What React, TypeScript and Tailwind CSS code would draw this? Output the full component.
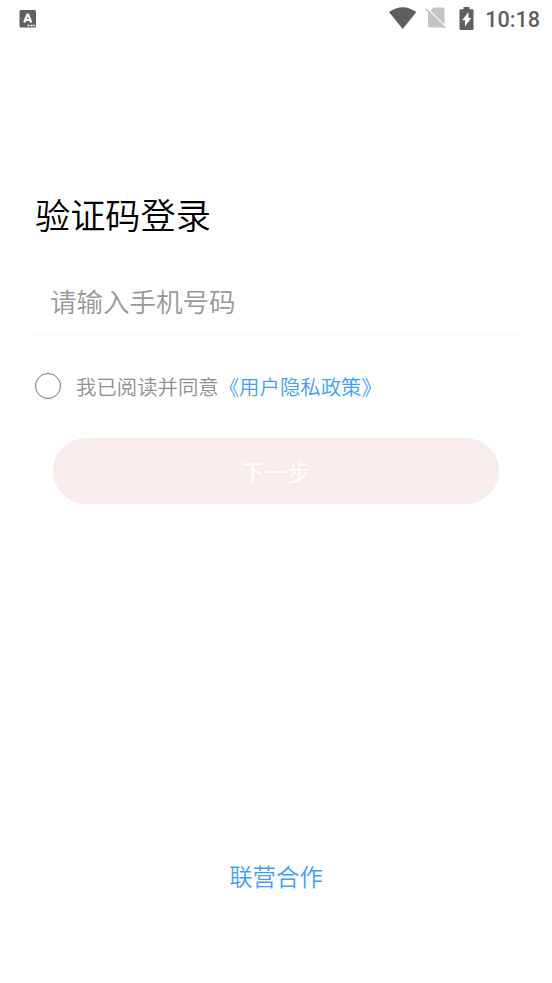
import { useState } from "react";

function StatusBar() {
    return (
        <header className="flex h-[38px] items-center justify-between pr-3 pl-[19px] text-[#606060]">
            <svg width="17" height="18" viewBox="0 0 17 18">
                <rect x="0.5" width="16.5" height="17.5" rx="1.5" fill="currentColor" />
                <path d="M5.2 12.5 8.3 4.5h.8L12.2 12.5M6.500 10h4.400" stroke="white" strokeWidth="2.1" fill="none" />
                <path d="M8.500 15.500h2M11.500 15.500h2M14.200 15.500h1.600" stroke="white" strokeWidth="1.3" />
            </svg>
            <div className="flex items-center">
                <svg width="28" height="22" viewBox="0 0 28 22" fill="currentColor" className="relative -top-px">
                    <path d="M0 5Q13.700-4.400 27.400 5L13.700 22Z" />
                </svg>
                <svg width="22" height="22" viewBox="0 0 22 22" className="relative -top-px ml-2">
                    <path d="M8.500 0.500h9a2 2 0 0 1 2 2v15.300L5.500 3.800Z" fill="#c4c4c4" />
                    <path d="M3 3.800 19 19.800 18 20.500H5a2 2 0 0 1-2-2Z" fill="#c4c4c4" />
                    <path d="M1 1.800 20 20.800" stroke="#c4c4c4" strokeWidth="1.7" />
                </svg>
                <svg width="15" height="23" viewBox="0 0 15 23" className="ml-3">
                    <path d="M4.500 0h6v2.300H13.500a1 1 0 0 1 1 1V22a1 1 0 0 1-1 1H1.500a1 1 0 0 1-1-1V3.300a1 1 0 0 1 1-1h3Z" fill="currentColor" />
                    <path d="M9.500 5v6h2.700L6 19.500v-6.200H3.200Z" fill="white" />
                </svg>
                <span className="ml-[11px] pt-[2px] font-[Roboto] text-[21.6px] font-medium">10:18</span>
            </div>
        </header>
    );
}

export default function App() {
    const [agreed, setAgreed] = useState(false);

    return (
        <div className="flex h-[983px] w-[552px] flex-col bg-white font-['Noto_Sans_CJK_SC',sans-serif] font-[350]">
            <StatusBar />
            <main className="flex flex-1 flex-col px-[35px]">
                <h1 className="mt-[150px] text-[35.2px] leading-[52px] font-[350] text-black">验证码登录</h1>
                <input
                    type="tel"
                    placeholder="请输入手机号码"
                    className="mt-[28px] h-[67px] border-b border-[#f5f5f5] px-[15px] pb-[2px] text-[26.5px] outline-none placeholder:text-[#999]"
                />
                <div className="mt-[36px] flex h-[30px] items-center text-[20.4px] text-[#909090]">
                    <button
                        aria-pressed={agreed}
                        onClick={() => setAgreed(!agreed)}
                        className="mr-[15px] size-[26px] rounded-full border border-[#777]"
                    />
                    我已阅读并同意
                    <a className="text-[#409eff]">《用户隐私政策》</a>
                </div>
                <button className="mx-[18px] mt-[37px] h-[66px] rounded-full bg-[#f9ecec] text-[23px] text-white">下一步</button>
            </main>
            <footer className="mb-[89px] text-center text-[23.4px] leading-[36px] text-[#409eff]">联营合作</footer>
        </div>
    );
}
